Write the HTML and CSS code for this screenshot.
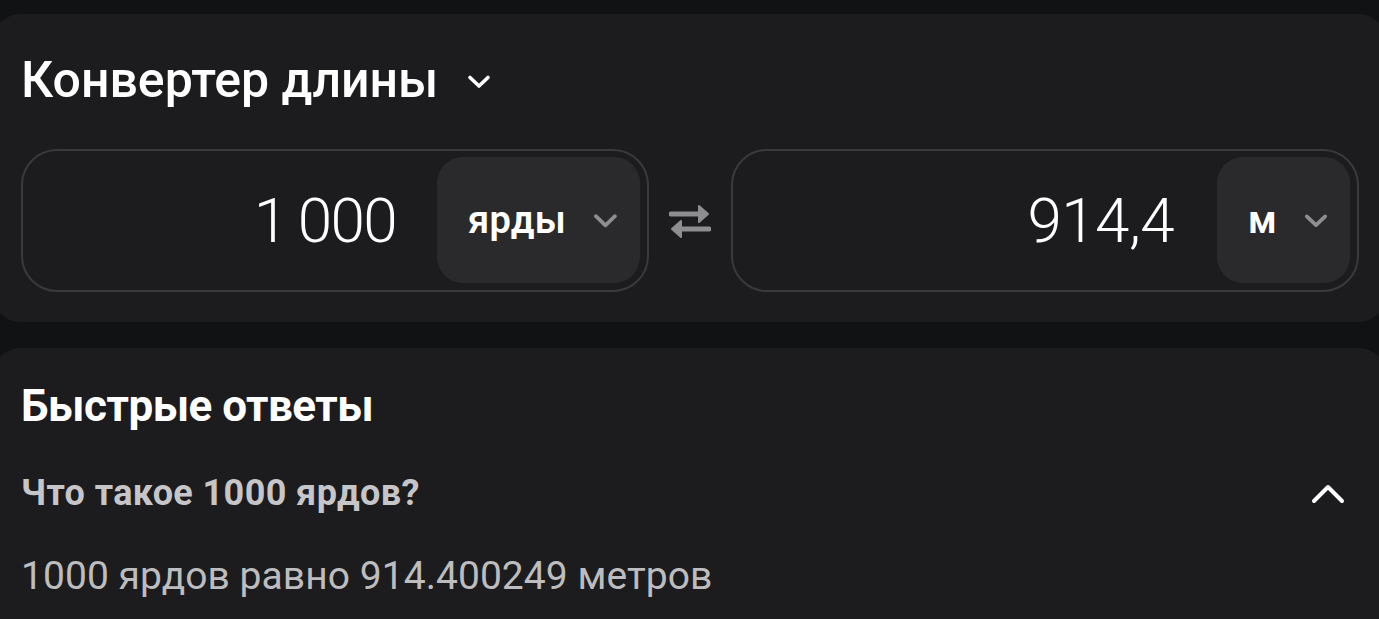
FILE: index.html
```html
<!DOCTYPE html>
<html lang="ru">
<head>
<meta charset="utf-8">
<title>Конвертер длины</title>
<link rel="stylesheet" href="styles.css">
</head>
<body>
<div class="page">
  <section class="card converter">
    <div class="title-row">
      <h1 class="title">Конвертер длины</h1>
      <svg class="title-chevron" width="24" height="16" viewBox="0 0 24 16"><path d="M3 3.5 L12 12 L21 3.5" fill="none" stroke="#fff" stroke-width="3.6" stroke-linecap="round" stroke-linejoin="round"/></svg>
    </div>
    <div class="conv-row">
      <div class="box">
        <div class="value">1&#8201;000</div>
        <div class="unit unit-wide">
          <span class="unit-name">ярды</span>
          <svg class="unit-chevron" width="26" height="16" viewBox="0 0 26 16"><path d="M3 3 L13 12.5 L23 3" fill="none" stroke="#8e8e90" stroke-width="4" stroke-linecap="round" stroke-linejoin="round"/></svg>
        </div>
      </div>
      <div class="swap">
        <svg width="42" height="40" viewBox="0 0 42 40"><path d="M2 13 H34" stroke="#8e8e90" stroke-width="5" stroke-linecap="round"/><path d="M30 5 L39 13 L30 21 Z" fill="#8e8e90" stroke="#8e8e90" stroke-width="2" stroke-linejoin="round"/><path d="M40 28 H8" stroke="#8e8e90" stroke-width="5" stroke-linecap="round"/><path d="M12 20 L3 28 L12 36 Z" fill="#8e8e90" stroke="#8e8e90" stroke-width="2" stroke-linejoin="round"/></svg>
      </div>
      <div class="box">
        <div class="value value-right">914,4</div>
        <div class="unit unit-narrow">
          <span class="unit-name">м</span>
          <svg class="unit-chevron" width="26" height="16" viewBox="0 0 26 16"><path d="M3 3 L13 12.5 L23 3" fill="none" stroke="#8e8e90" stroke-width="4" stroke-linecap="round" stroke-linejoin="round"/></svg>
        </div>
      </div>
    </div>
  </section>
  <section class="card faq">
    <h2 class="faq-title">Быстрые ответы</h2>
    <div class="faq-q">
      <span>Что такое 1000 ярдов?</span>
      <svg class="faq-chevron" width="34" height="22" viewBox="0 0 34 22"><path d="M3 19 L17 5 L31 19" fill="none" stroke="#fff" stroke-width="4" stroke-linecap="round" stroke-linejoin="round"/></svg>
    </div>
    <p class="faq-a">1000 ярдов равно 914.400249 метров</p>
  </section>
</div>
</body>
</html>
```

FILE: styles.css
```css
html, body {
  margin: 0;
  padding: 0;
  background: #111214;
  overflow: hidden;
}
body {
  font-family: Roboto, "Noto Sans", sans-serif;
  color: #fff;
}
.page {
  padding-top: 14px;
  width: 1379px;
}
.card {
  background: #1c1c1e;
  border-radius: 26px;
  margin: 0 -6px;
  padding: 0 26px 0 27px;
}
.converter {
  height: 308px;
  box-sizing: border-box;
  padding-top: 36px;
}
.title-row {
  display: flex;
  align-items: center;
  gap: 29px;
  height: 60px;
}
.title {
  margin: 0;
  font-size: 50px;
  line-height: 60px;
  font-weight: 500;
  letter-spacing: 0;
}
.title-chevron {
  margin-top: 4px;
}
.conv-row {
  margin-top: 39px;
  display: flex;
  align-items: center;
  gap: 20px;
}
.box {
  flex: 1;
  height: 143px;
  box-sizing: border-box;
  border: 2px solid #3a3a3c;
  border-radius: 36px;
  padding: 6px 7px 7px;
  display: flex;
  align-items: stretch;
}
.value {
  flex: 1;
  display: flex;
  align-items: center;
  justify-content: flex-end;
  padding-right: 41px;
  font-size: 62px;
  font-weight: 300;
  letter-spacing: -1.6px;
}
.value-right {
  padding-right: 43px;
  letter-spacing: -0.6px;
}
.unit {
  background: #2a2a2c;
  border-radius: 26px;
  display: flex;
  align-items: center;
  box-sizing: border-box;
  padding: 0 22px 0 31px;
  gap: 27px;
}
.unit-wide { width: 203px; }
.unit-narrow { width: 133px; }
.unit-name {
  font-size: 38px;
  font-weight: 600;
  letter-spacing: 0.3px;
}
.unit-chevron { margin-top: 2px; }
.swap {
  width: 42px;
  height: 40px;
  display: flex;
}
.faq {
  margin-top: 26px;
  padding-top: 30px;
  height: 300px;
  box-sizing: border-box;
}
.faq-title {
  margin: 0;
  font-size: 44px;
  line-height: 56px;
  font-weight: 700;
  letter-spacing: -0.5px;
}
.faq-q {
  margin-top: 37px;
  display: flex;
  align-items: center;
  justify-content: space-between;
  font-size: 36px;
  line-height: 44px;
  font-weight: 700;
  color: #c6c6c8;
  letter-spacing: 0.4px;
  padding-right: 14px;
}
.faq-a {
  margin: 37px 0 0;
  font-size: 39px;
  line-height: 48px;
  color: #bdbdbf;
  letter-spacing: 0.05px;
}
```
